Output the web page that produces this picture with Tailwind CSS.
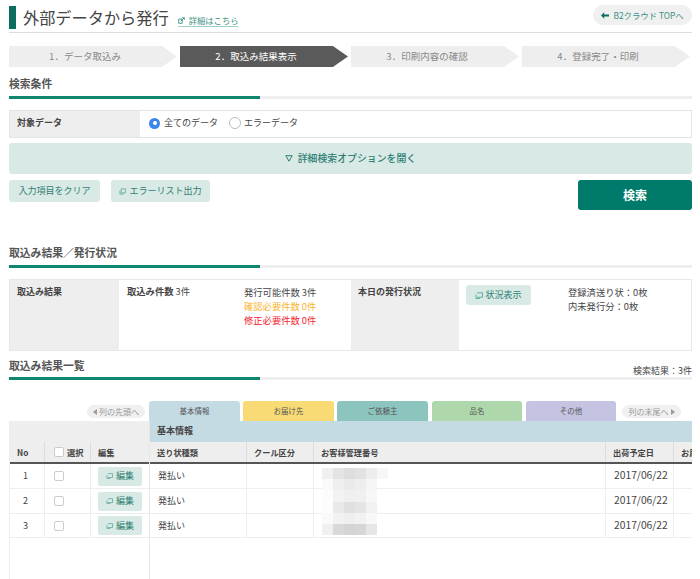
<!DOCTYPE html>
<html lang="ja">
<head>
<meta charset="utf-8">
<script src="https://cdn.jsdelivr.net/npm/@tailwindcss/browser@4"></script>
</head>
<body class="bg-white">
<div class="w-[700px] h-[579px] overflow-hidden pl-[9px] pr-[8px] text-[#444] text-[9px] font-['Noto_Sans_CJK_JP','Noto_Sans',sans-serif]">

  <!-- Header -->
  <header class="h-[33px] pt-[6px] border-b border-[#ddd] flex items-start">
    <div class="w-[7px] h-[23px] bg-[#0b6d5c] shrink-0"></div>
    <h1 class="ml-[7px] text-[16.2px] leading-[23px] font-normal text-[#444]">外部データから発行</h1>
    <a class="ml-[9px] mt-[9px] flex items-center gap-[4px] text-[8.3px] leading-[11px] text-[#3b8f83] border-b border-[#9fd0c8]">
      <svg class="w-[7px] h-[7px]" viewBox="0 0 10 10" fill="none" stroke="#2f8a7c" stroke-width="1.2"><path d="M1 3h5v6H1zM4 6l5-5M6 1h3v3"/></svg>
      詳細はこちら
    </a>
    <a class="ml-auto mt-[-1px] h-[20px] w-[99px] rounded-full bg-[#f0f0f0] flex items-center justify-center gap-[4px] text-[8.4px] text-[#3b8f83]">
      <svg class="w-[8px] h-[7px]" viewBox="0 0 10 8" fill="#0b6d5c"><path d="M0 4l4-4v2.6h6v2.8H4V8z"/></svg>
      B2クラウド TOPへ
    </a>
  </header>

  <!-- Steps -->
  <ol class="mt-[13px] h-[21px] flex gap-[3px] text-[9.5px]">
    <li class="w-[168px] h-[21px] bg-[#eee] text-[#888] flex items-center justify-center pr-[16px] [clip-path:polygon(0_0,91%_0,100%_50%,91%_100%,0_100%)]">1．データ取込み</li>
    <li class="w-[168px] h-[21px] bg-[#5a5a5a] text-white flex items-center justify-center pr-[16px] [clip-path:polygon(0_0,91%_0,100%_50%,91%_100%,0_100%)]">2．取込み結果表示</li>
    <li class="w-[168px] h-[21px] bg-[#eee] text-[#888] flex items-center justify-center pr-[16px] [clip-path:polygon(0_0,91%_0,100%_50%,91%_100%,0_100%)]">3．印刷内容の確認</li>
    <li class="w-[168px] h-[21px] bg-[#eee] text-[#888] flex items-center justify-center pr-[16px] [clip-path:polygon(0_0,91%_0,100%_50%,91%_100%,0_100%)]">4．登録完了・印刷</li>
  </ol>

  <!-- Search conditions -->
  <h2 class="h-[29px] pt-[9px] text-[10.8px] leading-[15px] font-bold text-[#555]">検索条件</h2>
  <div class="h-[3px] bg-[#eee]"><div class="w-[251px] h-[3px] bg-[#11866f]"></div></div>

  <div class="mt-[11px] h-[28px] border border-[#e4e4e4] flex">
    <div class="w-[130px] bg-[#eee] pl-[7px] font-bold leading-[24px] text-[#444]">対象データ</div>
    <div class="flex items-center pl-[9px] gap-[4px] pb-[2px]">
      <span class="w-[11px] h-[11px] rounded-full bg-[#3b86ea] flex items-center justify-center"><span class="w-[4px] h-[4px] rounded-full bg-white"></span></span>
      <span>全てのデータ</span>
      <span class="ml-[7px] w-[12px] h-[12px] rounded-full border border-[#bbb] bg-white"></span>
      <span class="ml-[-1px]">エラーデータ</span>
    </div>
  </div>

  <div class="mt-[5px] h-[31px] rounded-[3px] bg-[#d8e9e6] flex items-center justify-center gap-[5px] text-[9.9px] text-[#2f7f73] font-medium">
    <svg class="w-[8px] h-[7px]" viewBox="0 0 8 7" fill="none" stroke="#2f7f73" stroke-width="1"><path d="M.8.7h6.4L4 6.2z"/></svg>
    詳細検索オプションを開く
  </div>

  <div class="mt-[6px] h-[30px] flex items-start">
    <button class="w-[91px] h-[22px] rounded-[3px] bg-[#d8e9e6] text-[#2f7f73] text-[9px]">入力項目をクリア</button>
    <button class="ml-[11px] w-[99px] h-[22px] rounded-[3px] bg-[#d8e9e6] text-[#2f7f73] text-[9px] flex items-center justify-center gap-[3px]">
      <svg class="w-[7px] h-[7px]" viewBox="0 0 8 8" fill="none" stroke="#5aa79b" stroke-width=".9"><path d="M2.5 1h5v4.5h-5zM1 3v4h4.5"/></svg>
      エラーリスト出力
    </button>
    <button class="ml-auto w-[114px] h-[30px] rounded-[3px] bg-[#007b6b] text-white text-[12px] font-bold">検索</button>
  </div>

  <!-- Result status -->
  <h2 class="h-[55px] pt-[35px] text-[10.8px] leading-[15px] font-bold text-[#555]">取込み結果／発行状況</h2>
  <div class="h-[3px] bg-[#eee]"><div class="w-[251px] h-[3px] bg-[#11866f]"></div></div>

  <div class="mt-[11px] h-[72px] border border-[#e8e8e8] flex text-[9.3px]">
    <div class="w-[109px] bg-[#eee] pl-[7px] pt-[5px] font-bold leading-[13px] text-[#444] text-[9px]">取込み結果</div>
    <div class="w-[125px] pl-[8px] pt-[5px] leading-[13px]"><b class="font-bold">取込み件数</b> 3件</div>
    <div class="w-[107px] pt-[5px] leading-[14px]">
      <p>発行可能件数 3件</p>
      <p class="text-[#f7b52c]">確認必要件数 0件</p>
      <p class="text-[#f5222d]">修正必要件数 0件</p>
    </div>
    <div class="w-[108px] bg-[#eee] pl-[7px] pt-[5px] font-bold leading-[13px] text-[#444] text-[9px]">本日の発行状況</div>
    <div class="pl-[7px] pt-[5px] w-[109px]">
      <button class="w-[65px] h-[20px] rounded-[3px] bg-[#d8e9e6] text-[#2f7f73] text-[9px] flex items-center justify-center gap-[2px]">
        <svg class="w-[8px] h-[7px]" viewBox="0 0 8 7" fill="none" stroke="#5aa79b" stroke-width=".9"><path d="M2 .8h5.5v4.5H2M1 2.5v4h4"/></svg>
        状況表示
      </button>
    </div>
    <div class="pt-[5px] leading-[14px]">
      <p>登録済送り状：0枚</p>
      <p>内未発行分：0枚</p>
    </div>
  </div>

  <!-- Result list -->
  <div class="h-[26px] flex justify-between">
    <h2 class="pt-[7px] text-[10.8px] leading-[15px] font-bold text-[#555]">取込み結果一覧</h2>
    <span class="pt-[13px] leading-[13px]">検索結果：3件</span>
  </div>
  <div class="h-[3px] bg-[#eee]"><div class="w-[251px] h-[3px] bg-[#11866f]"></div></div>

  <!-- Tabs -->
  <div class="mt-[21px] h-[20px] flex items-start text-[7.5px] leading-[20px] text-center text-[#555]">
    <div class="ml-[78px] mt-[4px] w-[58px] h-[13px] rounded-full bg-[#f0f0f0] text-[#999] text-[8px] leading-[13px] flex items-center justify-center gap-[2px]">
      <svg class="w-[4px] h-[6px]" viewBox="0 0 4 6" fill="#999"><path d="M4 0v6L0 3z"/></svg>列の先頭へ
    </div>
    <div class="ml-[4px] w-[91px] h-[20px] rounded-t-[3px] bg-[#c5dbe4]">基本情報</div>
    <div class="ml-[3px] w-[91px] h-[20px] rounded-t-[3px] bg-[#f8db74]">お届け先</div>
    <div class="ml-[3px] w-[91px] h-[20px] rounded-t-[3px] bg-[#8cc5bd]">ご依頼主</div>
    <div class="ml-[4px] w-[90px] h-[20px] rounded-t-[3px] bg-[#aed8ab]">品名</div>
    <div class="ml-[4px] w-[90px] h-[20px] rounded-t-[3px] bg-[#c4c3e2]">その他</div>
    <div class="ml-[6px] mt-[4px] w-[59px] h-[13px] rounded-full bg-[#f0f0f0] text-[#999] text-[8px] leading-[13px] flex items-center justify-center gap-[2px]">
      列の末尾へ<svg class="w-[4px] h-[6px]" viewBox="0 0 4 6" fill="#999"><path d="M0 0v6l4-3z"/></svg>
    </div>
  </div>

  <!-- Table -->
  <div class="relative h-[158px] flex border-l border-[#eee]">
    <!-- Frozen columns -->
    <div class="w-[140px] shrink-0 border-r border-[#e8e8e8]">
      <div class="h-[21px] bg-[#eee]"></div>
      <div class="h-[22px] bg-[#eee] border-b-2 border-[#555] grid grid-cols-[35px_46px_1fr] font-bold text-[8.2px] leading-[20px] text-[#444]">
        <div class="pl-[7px] border-r border-[#ddd]">No</div>
        <div class="pl-[9px] border-r border-[#ddd] flex items-center gap-[3px]"><span class="w-[10px] h-[10px] rounded-[2px] border border-[#ccc] bg-white"></span>選択</div>
        <div class="pl-[7px]">編集</div>
      </div>
      <div class="h-[25px] grid grid-cols-[35px_46px_1fr] border-b border-[#eee] items-center">
        <div class="text-center pr-[3px] border-r border-[#eee] h-full leading-[24px]">1</div>
        <div class="pl-[9px] border-r border-[#eee] h-full flex items-center"><span class="w-[10px] h-[10px] rounded-[2px] border border-[#ccc]"></span></div>
        <div class="pl-[7px]"><span class="w-[44px] h-[19px] rounded-[2px] bg-[#d8e9e6] text-[#2f7f73] flex items-center justify-center gap-[3px]"><svg class="w-[7px] h-[6px]" viewBox="0 0 8 7" fill="none" stroke="#5aa79b" stroke-width=".9"><path d="M2 .8h5.5v4.5H2M1 2.5v4h4"/></svg>編集</span></div>
      </div>
      <div class="h-[25px] grid grid-cols-[35px_46px_1fr] border-b border-[#eee] items-center">
        <div class="text-center pr-[3px] border-r border-[#eee] h-full leading-[24px]">2</div>
        <div class="pl-[9px] border-r border-[#eee] h-full flex items-center"><span class="w-[10px] h-[10px] rounded-[2px] border border-[#ccc]"></span></div>
        <div class="pl-[7px]"><span class="w-[44px] h-[19px] rounded-[2px] bg-[#d8e9e6] text-[#2f7f73] flex items-center justify-center gap-[3px]"><svg class="w-[7px] h-[6px]" viewBox="0 0 8 7" fill="none" stroke="#5aa79b" stroke-width=".9"><path d="M2 .8h5.5v4.5H2M1 2.5v4h4"/></svg>編集</span></div>
      </div>
      <div class="h-[24px] grid grid-cols-[35px_46px_1fr] border-b border-[#eee] items-center">
        <div class="text-center pr-[3px] border-r border-[#eee] h-full leading-[23px]">3</div>
        <div class="pl-[9px] border-r border-[#eee] h-full flex items-center"><span class="w-[10px] h-[10px] rounded-[2px] border border-[#ccc]"></span></div>
        <div class="pl-[7px]"><span class="w-[44px] h-[19px] rounded-[2px] bg-[#d8e9e6] text-[#2f7f73] flex items-center justify-center gap-[3px]"><svg class="w-[7px] h-[6px]" viewBox="0 0 8 7" fill="none" stroke="#5aa79b" stroke-width=".9"><path d="M2 .8h5.5v4.5H2M1 2.5v4h4"/></svg>編集</span></div>
      </div>
    </div>
    <!-- Scrolling columns -->
    <div class="flex-1 min-w-0 overflow-hidden">
      <div class="h-[21px] bg-[#c5dbe4] pl-[7px] font-bold leading-[20px] text-[#444]">基本情報</div>
      <div class="h-[22px] bg-[#eee] border-b-2 border-[#555] grid grid-cols-[97px_67px_292px_68px_1fr] font-bold text-[8.2px] leading-[20px] text-[#444]">
        <div class="pl-[7px] border-r border-[#ddd]">送り状種類</div>
        <div class="pl-[7px] border-r border-[#ddd]">クール区分</div>
        <div class="pl-[7px] border-r border-[#ddd]">お客様管理番号</div>
        <div class="pl-[7px] border-r border-[#ddd]">出荷予定日</div>
        <div class="pl-[7px] whitespace-nowrap overflow-hidden">お届</div>
      </div>
      <div class="h-[25px] grid grid-cols-[97px_67px_292px_68px_1fr] border-b border-[#eee] leading-[24px]">
        <div class="pl-[8px] border-r border-[#eee]">発払い</div><div class="border-r border-[#eee]"></div><div class="border-r border-[#eee]"></div>
        <div class="pl-[8px] border-r border-[#eee] text-[10.3px] leading-[22px] whitespace-nowrap">2017/06/22</div><div></div>
      </div>
      <div class="h-[25px] grid grid-cols-[97px_67px_292px_68px_1fr] border-b border-[#eee] leading-[24px]">
        <div class="pl-[8px] border-r border-[#eee]">発払い</div><div class="border-r border-[#eee]"></div><div class="border-r border-[#eee]"></div>
        <div class="pl-[8px] border-r border-[#eee] text-[10.3px] leading-[22px] whitespace-nowrap">2017/06/22</div><div></div>
      </div>
      <div class="h-[24px] grid grid-cols-[97px_67px_292px_68px_1fr] border-b border-[#eee] leading-[23px]">
        <div class="pl-[8px] border-r border-[#eee]">発払い</div><div class="border-r border-[#eee]"></div><div class="border-r border-[#eee]"></div>
        <div class="pl-[8px] border-r border-[#eee] text-[10.3px] leading-[22px] whitespace-nowrap">2017/06/22</div><div></div>
      </div>
    </div>
    <!-- Pixelated redaction over the customer number column -->
    <div class="absolute left-[312px] top-[47px] w-[66px] h-[67px] grid grid-cols-6 grid-rows-6">
      <div class="bg-[#f0f0f0]"></div><div class="bg-[#e4e4e4]"></div><div class="bg-[#dedede]"></div><div class="bg-[#e2e2e2]"></div><div class="bg-[#ededed]"></div><div class="bg-[#f7f7f7]"></div>
      <div class="bg-[#fafafa]"></div><div class="bg-[#efefef]"></div><div class="bg-[#eaeaea]"></div><div class="bg-[#eeeeee]"></div><div class="bg-[#f5f5f5]"></div><div></div>
      <div class="bg-[#fcfcfc]"></div><div class="bg-[#f3f3f3]"></div><div class="bg-[#efefef]"></div><div class="bg-[#f0f0f0]"></div><div class="bg-[#f7f7f7]"></div><div></div>
      <div class="bg-[#fcfcfc]"></div><div class="bg-[#e9e9e9]"></div><div class="bg-[#e0e0e0]"></div><div class="bg-[#e5e5e5]"></div><div class="bg-[#f2f2f2]"></div><div></div>
      <div class="bg-[#fafafa]"></div><div class="bg-[#f2f2f2]"></div><div class="bg-[#efefef]"></div><div class="bg-[#f2f2f2]"></div><div class="bg-[#f8f8f8]"></div><div></div>
      <div class="bg-[#f0f0f0]"></div><div class="bg-[#d9d9d9]"></div><div class="bg-[#d4d4d4]"></div><div class="bg-[#d6d6d6]"></div><div class="bg-[#e6e6e6]"></div><div></div>
    </div>
  </div>
</div>
</body>
</html>
